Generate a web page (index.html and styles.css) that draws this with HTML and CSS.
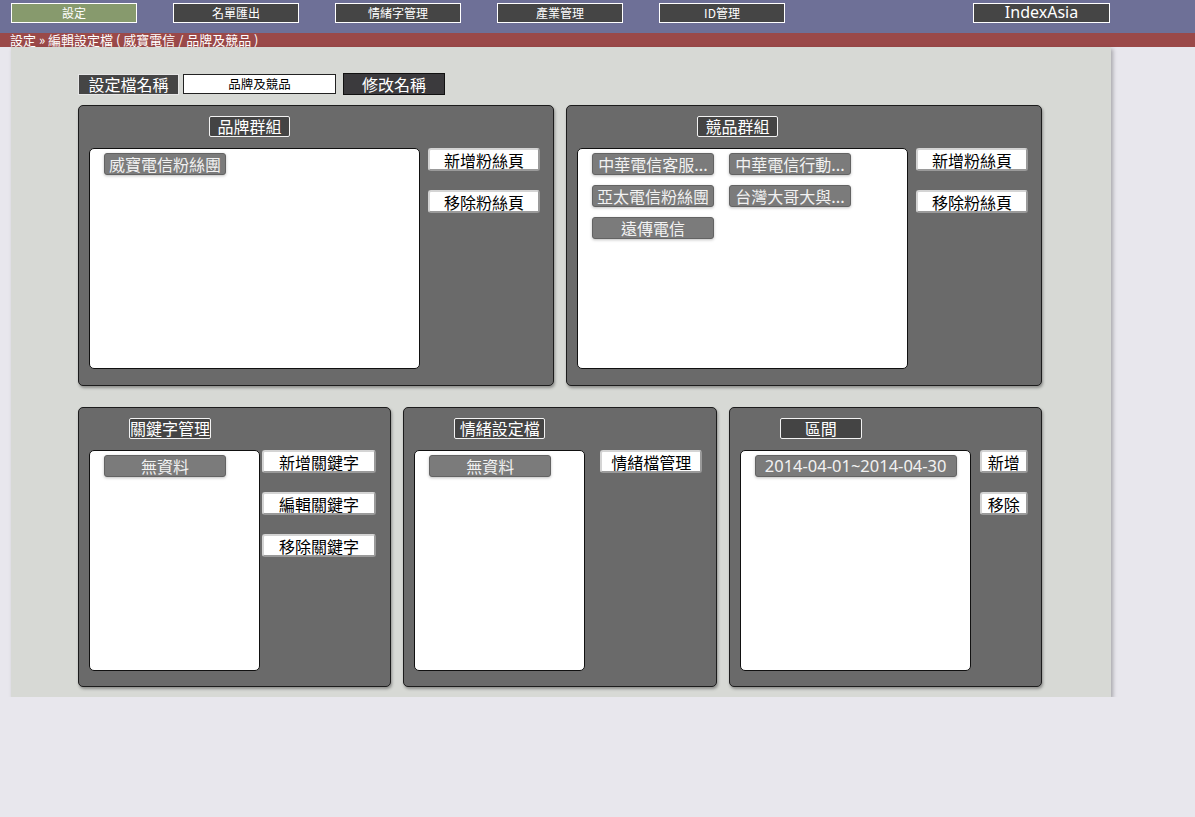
FILE: index.html
```html
<!DOCTYPE html>
<html lang="zh-Hant">
<head>
<meta charset="utf-8">
<title>設定</title>
<link rel="stylesheet" href="styles.css">
</head>
<body>
<nav class="topnav">
  <a class="nav-btn nav-active">設定</a>
  <a class="nav-btn">名單匯出</a>
  <a class="nav-btn">情緒字管理</a>
  <a class="nav-btn">產業管理</a>
  <a class="nav-btn">ID管理</a>
  <a class="nav-btn nav-brand">IndexAsia</a>
</nav>
<div class="crumb">設定 » 編輯設定檔 ( 威寶電信 / 品牌及競品 )</div>
<main class="main">
  <div class="name-row">
    <span class="name-label">設定檔名稱</span>
    <div class="name-input">品牌及競品</div>
    <button class="rename-btn">修改名稱</button>
  </div>

  <div class="row row-top">
    <section class="panel">
      <div class="panel-head head-wide"><span class="head-label w81">品牌群組</span></div>
      <div class="panel-body gap8">
        <div class="list w331">
          <span class="tag">威寶電信粉絲團</span>
        </div>
        <div class="btns w112">
          <button class="btn">新增粉絲頁</button>
          <button class="btn">移除粉絲頁</button>
        </div>
      </div>
    </section>
    <section class="panel">
      <div class="panel-head head-wide"><span class="head-label w81">競品群組</span></div>
      <div class="panel-body gap8">
        <div class="list w331">
          <span class="tag">中華電信客服...</span>
          <span class="tag">中華電信行動...</span>
          <span class="tag">亞太電信粉絲團</span>
          <span class="tag">台灣大哥大與...</span>
          <span class="tag">遠傳電信</span>
        </div>
        <div class="btns w112">
          <button class="btn">新增粉絲頁</button>
          <button class="btn">移除粉絲頁</button>
        </div>
      </div>
    </section>
  </div>

  <div class="row row-bottom">
    <section class="panel">
      <div class="panel-head head-narrow"><span class="head-label w82">關鍵字管理</span></div>
      <div class="panel-body gap2">
        <div class="list w171">
          <span class="tag">無資料</span>
        </div>
        <div class="btns w114">
          <button class="btn">新增關鍵字</button>
          <button class="btn">編輯關鍵字</button>
          <button class="btn">移除關鍵字</button>
        </div>
      </div>
    </section>
    <section class="panel">
      <div class="panel-head head-narrow"><span class="head-label w91">情緒設定檔</span></div>
      <div class="panel-body gap15">
        <div class="list w171">
          <span class="tag">無資料</span>
        </div>
        <div class="btns w102">
          <button class="btn">情緒檔管理</button>
        </div>
      </div>
    </section>
    <section class="panel">
      <div class="panel-head head-narrow"><span class="head-label w82">區間</span></div>
      <div class="panel-body gap9">
        <div class="list w231">
          <span class="tag tag-date">2014-04-01~2014-04-30</span>
        </div>
        <div class="btns w48">
          <button class="btn">新增</button>
          <button class="btn">移除</button>
        </div>
      </div>
    </section>
  </div>
</main>
</body>
</html>
```

FILE: styles.css
```css
* { box-sizing: border-box; }

html, body {
  margin: 0;
  padding: 0;
  background: #e8e7ed;
  font-family: "Noto Sans", "Noto Sans CJK TC", sans-serif;
}

.topnav {
  height: 33px;
  background: #6e7097;
  display: flex;
  align-items: flex-start;
  padding: 3px 0 0 11px;
  gap: 36px;
}

.nav-btn {
  width: 126px;
  height: 20px;
  background: #454545;
  border: 1px solid #fff;
  color: #fff;
  font-size: 12px;
  line-height: 18px;
  text-align: center;
  font-family: "Noto Sans CJK TC", sans-serif;
}

.nav-active { background: #879a6d; }

.nav-brand {
  width: 137px;
  margin-left: auto;
  margin-right: 85px;
  font-family: "Noto Sans", sans-serif;
  font-size: 16px;
  line-height: 17px;
}

.crumb {
  height: 14px;
  background: #9a4949;
  color: #fff;
  font-size: 13px;
  line-height: 14px;
  padding-left: 10px;
  font-family: "Noto Sans CJK TC", sans-serif;
  white-space: nowrap;
}

.main {
  width: 1100px;
  height: 650px;
  margin-left: 11px;
  background: #d7d9d5;
  box-shadow: 2px 2px 4px rgba(0, 0, 0, 0.28);
  padding: 26px 0 10px 67px;
}

.name-row {
  display: flex;
  align-items: center;
  height: 22px;
}

.name-label {
  width: 101px;
  height: 21px;
  background: #454545;
  border: 1px solid #e6e6e6;
  color: #fff;
  font-size: 16px;
  line-height: 19px;
  text-align: center;
  font-family: "Noto Sans CJK TC", sans-serif;
}

.name-input {
  margin-left: 4px;
  width: 153px;
  height: 20px;
  background: #fff;
  border: 1px solid #222;
  font-size: 12.5px;
  line-height: 18px;
  text-align: center;
  color: #000;
  font-family: "Noto Sans CJK TC", sans-serif;
}

.rename-btn {
  margin-left: 7px;
  width: 102px;
  height: 22px;
  background: #3b3a3d;
  border: 1px solid #111;
  color: #fff;
  font-size: 16px;
  line-height: 19px;
  padding: 0;
  font-family: "Noto Sans CJK TC", sans-serif;
}

.row {
  display: grid;
  width: 964px;
  gap: 12px;
}

.row-top {
  margin-top: 10px;
  grid-template-columns: 1fr 1fr;
}

.row-bottom {
  margin-top: 21px;
  grid-template-columns: 1fr 1fr 1fr;
}

.panel {
  background: #6a6a6a;
  border: 1px solid #1c1c1c;
  border-radius: 5px;
  box-shadow: 1px 2px 3px rgba(0, 0, 0, 0.35);
  padding: 10px 0 16px 10px;
}

.row-top .panel { height: 281px; }
.row-bottom .panel { height: 280px; }

.panel-head { display: flex; height: 21px; }
.head-wide { padding-left: 120px; }
.head-narrow { padding-left: 40px; }

.head-label {
  height: 21px;
  background: #444;
  border: 1px solid #f2f2f2;
  border-radius: 2px;
  color: #fff;
  font-size: 16px;
  line-height: 19px;
  text-align: center;
  font-family: "Noto Sans CJK TC", sans-serif;
}

.w81 { width: 81px; }
.w82 { width: 82px; }
.w91 { width: 91px; }

.panel-body {
  display: flex;
  align-items: flex-start;
  margin-top: 11px;
}

.row-top .panel-body { margin-top: 11px; }

.gap2 { gap: 2px; }
.gap8 { gap: 8px; }
.gap9 { gap: 9px; }
.gap15 { gap: 15px; }

.list {
  height: 221px;
  background: #fff;
  border: 1px solid #111;
  border-radius: 5px;
  display: flex;
  flex-wrap: wrap;
  align-content: flex-start;
  column-gap: 15px;
  row-gap: 10px;
  padding: 4px 10px 0 14px;
}

.w331 { width: 331px; }
.w171 { width: 171px; }
.w231 { width: 231px; }

.tag {
  width: 122px;
  height: 22px;
  padding: 0;
  background: #7b7b7b;
  border: 1px solid #636363;
  border-radius: 3px;
  color: #f2f2f2;
  font-size: 16px;
  line-height: 20px;
  text-align: center;
  white-space: nowrap;
  overflow: hidden;
  box-shadow: 0 1px 3px rgba(0, 0, 0, 0.25);
  font-family: "Noto Sans CJK TC", sans-serif;
}

.tag-date {
  width: 202px;
  font-family: "Noto Sans", sans-serif;
  font-size: 16.5px;
}

.btns {
  display: flex;
  flex-direction: column;
  gap: 19px;
}

.w112 { width: 112px; }
.w114 { width: 114px; }
.w102 { width: 102px; }
.w48 { width: 48px; }

.btn {
  height: 23px;
  padding: 0;
  background: #fff;
  border: 2px solid;
  border-color: #d4d4d4 #9a9a9a #9a9a9a #d4d4d4;
  border-radius: 3px;
  color: #000;
  font-size: 16px;
  line-height: 18px;
  text-align: center;
  font-family: "Noto Sans CJK TC", sans-serif;
}
```
